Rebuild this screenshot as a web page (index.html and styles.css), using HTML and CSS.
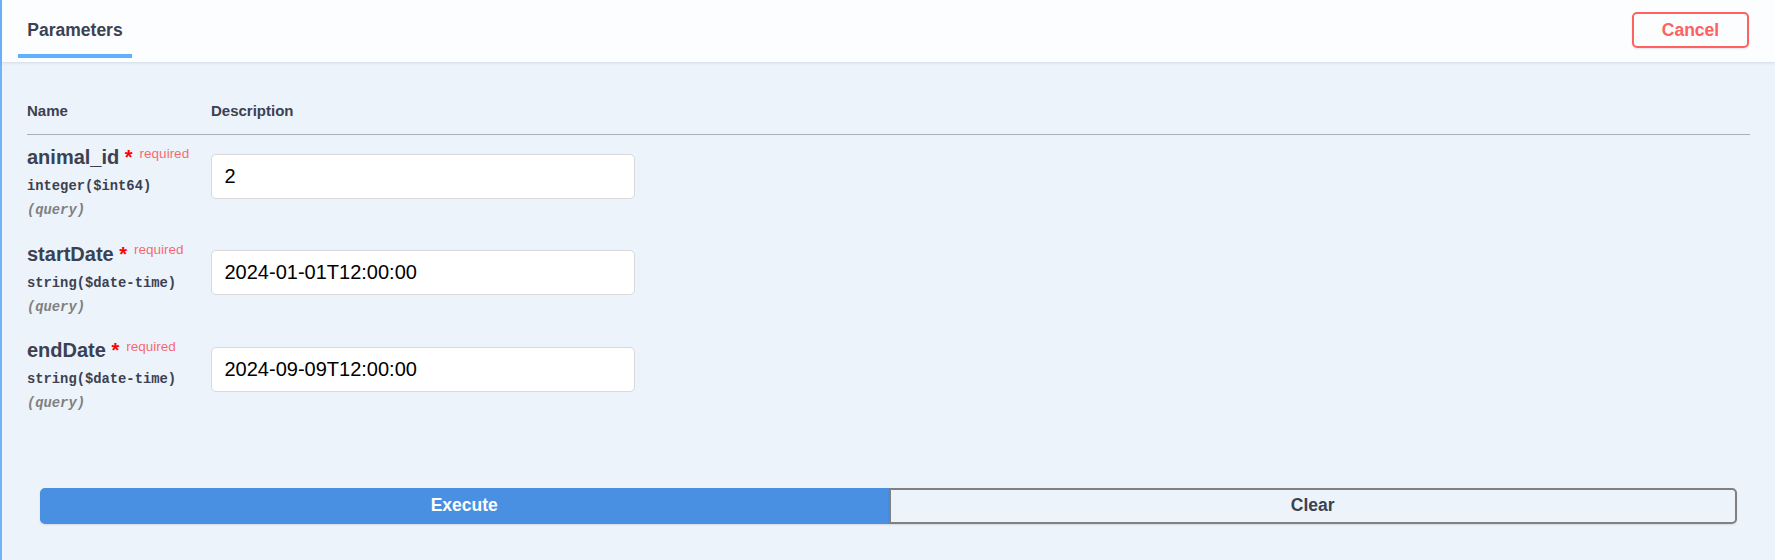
FILE: index.html
```html
<!DOCTYPE html>
<html>
<head>
<meta charset="utf-8">
<title>Parameters</title>
<link rel="stylesheet" href="styles.css">
</head>
<body>
<div class="opblock">
  <div class="section-header">
    <div class="tab">Parameters</div>
    <button class="btn-cancel">Cancel</button>
  </div>
  <div class="section-body">
    <div class="params-head">
      <div>Name</div>
      <div>Description</div>
    </div>
    <div class="param-row">
      <div class="param-col">
        <div class="param-name">animal_id<span class="star">&nbsp;*</span><span class="req">required</span></div>
        <div class="param-type">integer($int64)</div>
        <div class="param-in">(query)</div>
      </div>
      <div class="desc-col">
        <input class="param-input" type="text" value="2">
      </div>
    </div>
    <div class="param-row">
      <div class="param-col">
        <div class="param-name">startDate<span class="star">&nbsp;*</span><span class="req">required</span></div>
        <div class="param-type">string($date-time)</div>
        <div class="param-in">(query)</div>
      </div>
      <div class="desc-col">
        <input class="param-input" type="text" value="2024-01-01T12:00:00">
      </div>
    </div>
    <div class="param-row">
      <div class="param-col">
        <div class="param-name">endDate<span class="star">&nbsp;*</span><span class="req">required</span></div>
        <div class="param-type">string($date-time)</div>
        <div class="param-in">(query)</div>
      </div>
      <div class="desc-col">
        <input class="param-input" type="text" value="2024-09-09T12:00:00">
      </div>
    </div>
    <div class="btn-group">
      <button class="btn-execute">Execute</button>
      <button class="btn-clear">Clear</button>
    </div>
  </div>
</div>
</body>
</html>
```
FILE: styles.css
```css
html, body {
  margin: 0;
  padding: 0;
}
body {
  font-family: "Liberation Sans", Arial, sans-serif;
  color: #3b4151;
  background: #ffffff;
}
.opblock {
  border-left: 2px solid #6fb3f8;
  background: #ecf3fb;
  min-height: 560px;
  box-sizing: border-box;
}
.section-header {
  display: flex;
  justify-content: space-between;
  align-items: flex-start;
  height: 62px;
  box-sizing: border-box;
  padding: 0 26px 0 16px;
  background: #fcfdfe;
  box-shadow: 0 1px 3px rgba(0, 0, 0, 0.1);
}
.tab {
  width: 114px;
  text-align: center;
  padding-top: 20px;
  padding-bottom: 14px;
  line-height: 20px;
  font-size: 17.5px;
  font-weight: 700;
  color: #3b4151;
  border-bottom: 4px solid #61affe;
}
.btn-cancel {
  margin-top: 12px;
  width: 117px;
  height: 36px;
  box-sizing: border-box;
  border: 2px solid #ff6060;
  border-radius: 5px;
  background: transparent;
  color: #ff6060;
  font-family: "Liberation Sans", Arial, sans-serif;
  font-size: 17.5px;
  font-weight: 700;
  padding: 0;
  box-shadow: 0 1px 2px rgba(0, 0, 0, 0.1);
}
.section-body {
  padding: 40px 25px 0 25px;
}
.params-head {
  display: grid;
  grid-template-columns: 184px 1fr;
  border-bottom: 1px solid #a9b0bc;
  padding-bottom: 14px;
  font-size: 15px;
  font-weight: 700;
  line-height: 18px;
  color: #3b4151;
}
.param-row {
  display: grid;
  grid-template-columns: 184px 1fr;
  padding: 10.3px 0 8.2px;
}
.param-name {
  font-size: 20px;
  font-weight: 700;
  line-height: 24px;
  color: #3b4151;
  white-space: nowrap;
}
.star {
  color: #ff0000;
}
.req {
  font-size: 13.5px;
  font-weight: 400;
  line-height: 1;
  color: rgba(255, 0, 0, 0.6);
  padding: 0 6px 0 7px;
  vertical-align: 6.5px;
}
.param-type,
.param-in {
  font-family: "Liberation Mono", "DejaVu Sans Mono", monospace;
  font-size: 13.8px;
  font-weight: 700;
  line-height: 18px;
  padding: 3px 0;
}
.param-type {
  margin-top: 6px;
  color: #3b4151;
}
.param-in {
  font-style: italic;
  color: #808080;
}
.param-input {
  display: block;
  margin-top: 8.7px;
  width: 424px;
  height: 45px;
  box-sizing: border-box;
  border: 1px solid #d9d9d9;
  border-radius: 5px;
  padding: 10px 12.5px;
  font-family: "Liberation Sans", Arial, sans-serif;
  font-size: 20px;
  color: #000000;
  background: #ffffff;
  outline: none;
}
.btn-group {
  display: flex;
  margin: 63.5px 13px 0;
}
.btn-execute,
.btn-clear {
  flex: 1;
  height: 36px;
  box-sizing: border-box;
  font-family: "Liberation Sans", Arial, sans-serif;
  font-size: 17.5px;
  font-weight: 700;
  padding: 0;
  box-shadow: 0 1px 2px rgba(0, 0, 0, 0.1);
}
.btn-execute {
  background: #4990e2;
  border: 2px solid #4990e2;
  color: #ffffff;
  border-radius: 5px 0 0 5px;
}
.btn-clear {
  background: transparent;
  border: 2px solid #808080;
  color: #3b4151;
  border-radius: 0 5px 5px 0;
}
```
